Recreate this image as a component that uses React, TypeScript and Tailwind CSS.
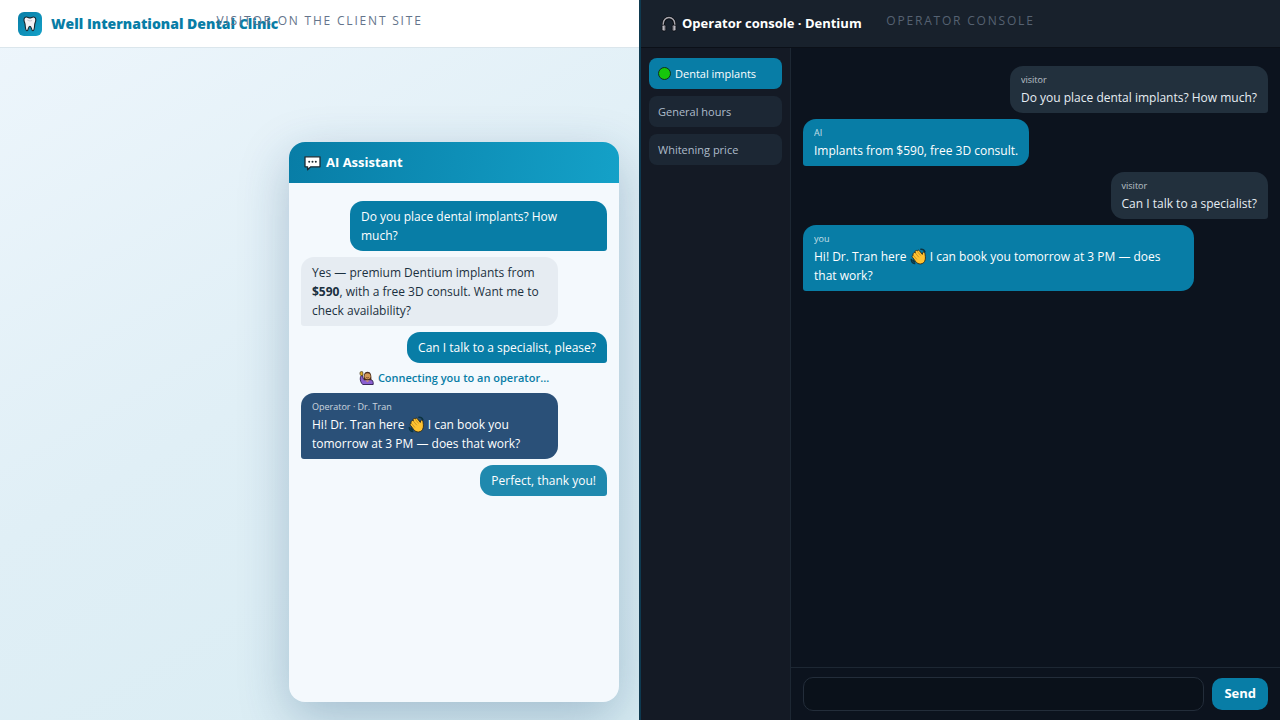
import { ReactNode } from "react";
import clsx from "clsx";

interface MessageInterface {
  id: number;
  from: "visitor" | "bot" | "operator";
  meta?: string;
  text: ReactNode;
  fading?: boolean;
}

function ToothIcon() {
  return (
    <svg width="16" height="16" viewBox="0 0 16 16" aria-hidden="true">
      <path
        d="M4.2 1C2.4 1.3 1.7 3 2.1 5c.2 1.200.9 2.200 1 3.500.2 2.500.3 6.300 1.900 6.300 1.500 0 1.100-4.600 2.900-4.600s1.400 4.600 2.900 4.600c1.600 0 1.700-3.800 1.900-6.300.1-1.300.8-2.300 1-3.500.4-2-.3-3.700-2.100-4C10.300.8 9.300 1.900 7.900 1.900S5.500.8 4.200 1z"
        fill="#f3f0f4"
        stroke="#17252c"
        strokeWidth="1.1"
      />
      <path d="M5.400 4c1 .8 3.200 1.300 4.600.5" fill="none" stroke="#b9b4c2" strokeWidth=".8" />
    </svg>
  );
}

function SpeechIcon() {
  return (
    <svg width="17" height="16" viewBox="0 0 17 16" aria-hidden="true">
      <path
        d="M1 1.800h15v10H6.800L3.600 14.800v-3H1z"
        fill="#fff"
        stroke="#1c2b33"
        strokeWidth="1.300"
        strokeLinejoin="round"
      />
      <circle cx="5.200" cy="6.800" r="1" fill="#1c2b33" />
      <circle cx="8.500" cy="6.800" r="1" fill="#1c2b33" />
      <circle cx="11.800" cy="6.800" r="1" fill="#1c2b33" />
    </svg>
  );
}

function HeadphonesIcon() {
  return (
    <svg width="16" height="16" viewBox="0 0 16 16" aria-hidden="true">
      <path d="M2.500 11V7.500a5.500 5.800 0 0 1 11 0V11" fill="none" stroke="#06090d" strokeWidth="3" />
      <path d="M2.300 11V7.500a5.700 6 0 0 1 11.400 0V11" fill="none" stroke="#a9a7ae" strokeWidth="1.500" />
      <rect x="1.200" y="9" width="3.600" height="6" rx="1.300" fill="#8d8b93" stroke="#06090d" strokeWidth=".7" />
      <rect x="11.200" y="9" width="3.600" height="6" rx="1.300" fill="#8d8b93" stroke="#06090d" strokeWidth=".7" />
      <path d="M2.200 10v4M13.800 10v4" stroke="#d8d6dc" strokeWidth=".9" />
    </svg>
  );
}

function WaveIcon() {
  return (
    <svg
      className="inline-block align-[-4px]"
      width="17"
      height="17"
      viewBox="0 0 16 16"
      role="img"
      aria-label="waving hand"
    >
      <path
        d="M3.300 4.800c.5-.7 1.200-.7 1.700-.2L4.800 3.400c0-1.100 1.200-1.500 1.900-.7.6-.8 1.500-.9 2.100-.2L11.600 6l.3-1.400c.3-1.200 1.900-1.100 2.100.2.300 2.100.8 4.200.3 6.200-.5 2.400-2.100 3.800-4.300 4-2 .1-3.500-.7-4.700-2.300L2.300 8.700c-.7-1-.2-1.900.8-1.900-.5-.6-.4-1.400.2-2z"
        fill="#ffc331"
        stroke="#2b2412"
        strokeWidth=".8"
      />
      <path d="M5 4.700l3.300 4M6.700 2.900l3.300 4.200M3.200 6.900l3.300 3.900" fill="none" stroke="#b27d1c" strokeWidth=".6" />
      <path
        d="M10.200 1.200c1.800-.1 3.300.8 3.800 2.300M1.200 10.800c.1 2 1.300 3.500 3.200 3.900M2.900 11.400c.2.900.8 1.500 1.600 1.700"
        fill="none"
        stroke="#0c3440"
        strokeWidth="1.400"
        strokeLinecap="round"
      />
    </svg>
  );
}

function RaisedHandIcon() {
  return (
    <svg width="15" height="14" viewBox="0 0 15 14" aria-hidden="true">
      <path d="M2.200 4.500L1.300 6.800c-.3 3 .8 5 2.400 6.700h10.500c.3-3-.7-4.700-2.700-5H5.800C4 8.300 3.700 6.500 3.700 4.700z" fill="#8b5fd0" stroke="#2b1c4b" strokeWidth=".9" />
      <path d="M1 1.300L2 .6l1.700.2.4 3.400-2 .6C1.200 4.200.7 2.500 1 1.300z" fill="#e3b02a" stroke="#2c2110" strokeWidth=".6" />
      <path d="M4.800 9.200C4.400 4 5.200.8 8.500.8s4.200 3.200 3.800 8.400z" fill="#4a2d1c" />
      <circle cx="8.500" cy="5.200" r="3" fill="#d39a58" />
      <path d="M7.200 6.300c.8.8 1.800.8 2.600 0" fill="none" stroke="#4d2a16" strokeWidth=".7" />
      <path d="M6.300 9.500h4.400l-2.200 1.400z" fill="#d39a58" />
    </svg>
  );
}

const widgetMessages: MessageInterface[] = [
  { id: 1, from: "visitor", text: "Do you place dental implants? How much?" },
  {
    id: 2,
    from: "bot",
    text: (
      <>
        Yes — premium Dentium implants from <b>$590</b>, with a free 3D consult. Want me to check
        availability?
      </>
    ),
  },
  { id: 3, from: "visitor", text: "Can I talk to a specialist, please?" },
];

const handoffMessages: MessageInterface[] = [
  {
    id: 4,
    from: "operator",
    meta: "Operator · Dr. Tran",
    text: (
      <>
        Hi! Dr. Tran here <WaveIcon /> I can book you tomorrow at 3 PM — does that work?
      </>
    ),
  },
  { id: 5, from: "visitor", text: "Perfect, thank you!", fading: true },
];

const consoleMessages: MessageInterface[] = [
  { id: 1, from: "visitor", meta: "visitor", text: "Do you place dental implants? How much?" },
  { id: 2, from: "bot", meta: "AI", text: "Implants from $590, free 3D consult." },
  { id: 3, from: "visitor", meta: "visitor", text: "Can I talk to a specialist?" },
  {
    id: 4,
    from: "operator",
    meta: "you",
    text: (
      <>
        Hi! Dr. Tran here <WaveIcon /> I can book you tomorrow at 3 PM — does that work?
      </>
    ),
  },
];

const conversations = [
  { id: 1, title: "Dental implants", active: true },
  { id: 2, title: "General hours", active: false },
  { id: 3, title: "Whitening price", active: false },
];

const widgetColors = {
  visitor: "bg-[#087da6] text-white",
  bot: "bg-[#e6ecf2] text-[#1b3040]",
  operator: "bg-[#2a5078] text-white",
};

const consoleColors = {
  visitor: "bg-[#22303d] text-[#e6edf3]",
  bot: "bg-[#087da6] text-white",
  operator: "bg-[#087da6] text-white",
};

function Bubble({
  message,
  colors,
}: {
  message: MessageInterface;
  colors: typeof widgetColors;
}) {
  return (
    <div
      className={clsx(
        "max-w-[84%] rounded-[13px] px-[11px] py-1.5 text-xs leading-[19px]",
        message.from === "visitor" ? "self-end rounded-br-[3px]" : "self-start rounded-bl-[3px]",
        message.fading && "opacity-90",
        colors[message.from]
      )}
    >
      {message.meta && (
        <div className="text-[9px] leading-4 opacity-75">{message.meta}</div>
      )}
      <p>{message.text}</p>
    </div>
  );
}

function ClientSite() {
  return (
    <section className="relative flex flex-col bg-linear-150 from-[#eef6fc] via-[#e0eff6] to-[#d8ecf3]">
      <header className="flex h-12 items-center gap-[9px] border-b border-[#dbe6ec] bg-white px-[18px]">
        <div className="flex size-6 items-center justify-center rounded-md bg-linear-135 from-[#087da6] to-[#14a1c8]">
          <ToothIcon />
        </div>
        <h1 className="text-sm font-extrabold text-[#087da6]">Well International Dental Clinic</h1>
      </header>
      <p className="absolute inset-x-0 top-3 text-center text-xs leading-[18px] tracking-[0.15em] text-[#64748b]">
        VISITOR ON THE CLIENT SITE
      </p>
      <div className="flex flex-1 items-end justify-end px-5 pb-[18px]">
        <div className="flex h-[560px] w-[330px] flex-col overflow-hidden rounded-2xl bg-[#f4f9fd] shadow-[0_16px_50px_rgba(20,70,110,0.28)]">
          <div className="flex items-center gap-[5px] bg-linear-100 from-[#087da6] to-[#14a1c8] px-[15px] py-[10px] text-[13px] leading-[21px] font-bold text-white">
            <SpeechIcon />
            <h2>AI Assistant</h2>
          </div>
          <div className="flex flex-1 flex-col gap-1.5 px-3 pt-[18px]">
            {widgetMessages.map((message) => (
              <Bubble key={message.id} message={message} colors={widgetColors} />
            ))}
            <div className="flex items-center justify-center gap-1 text-[11px] leading-[18px] font-semibold text-[#087da6]">
              <RaisedHandIcon />
              Connecting you to an operator…
            </div>
            {handoffMessages.map((message) => (
              <Bubble key={message.id} message={message} colors={widgetColors} />
            ))}
          </div>
        </div>
      </div>
    </section>
  );
}

function OperatorConsole() {
  return (
    <section className="relative flex flex-col bg-[#0c131e]">
      <header className="flex h-12 items-center gap-[5px] border-b border-[#0b1018] bg-[#18212c] px-5 text-white">
        <HeadphonesIcon />
        <h1 className="text-[13px] font-bold">Operator console · Dentium</h1>
      </header>
      <p className="absolute inset-x-0 top-3 text-center text-xs leading-[18px] tracking-[0.15em] text-[#566272]">
        OPERATOR CONSOLE
      </p>
      <div className="flex flex-1">
        <nav className="flex w-[150px] flex-col gap-[7px] border-r border-[#1d2733] bg-[#141a25] px-2 pt-[10px]">
          {conversations.map((item) => (
            <button
              key={item.id}
              className={clsx(
                "flex items-center gap-1 rounded-lg px-[9px] py-[7px] text-left text-[11px] leading-[17px]",
                item.active ? "bg-[#087da6] text-white" : "bg-[#1c2734] text-[#aebccb]"
              )}
            >
              {item.active && (
                <span className="size-[13px] rounded-full border border-[#10301c] bg-[#16c60c]" />
              )}
              {item.title}
            </button>
          ))}
        </nav>
        <div className="flex flex-1 flex-col">
          <div className="flex flex-1 flex-col gap-1.5 px-3 pt-[18px]">
            {consoleMessages.map((message) => (
              <Bubble key={message.id} message={message} colors={consoleColors} />
            ))}
          </div>
          <form
            className="flex items-center gap-2 border-t border-[#1d2733] px-3 py-[9px]"
            onSubmit={(e) => e.preventDefault()}
          >
            <input
              type="text"
              aria-label="Reply"
              className="h-[34px] min-w-0 flex-1 rounded-[10px] border border-[#232d3a] bg-[#0a111a] px-3 text-[13px] text-white outline-none"
            />
            <button className="h-8 rounded-[10px] bg-[#087da6] px-3 text-[13px] font-bold text-white">
              Send
            </button>
          </form>
        </div>
      </div>
    </section>
  );
}

export default function App() {
  return (
    <main className="grid min-h-screen grid-cols-[1fr_2px_1fr] font-['Open_Sans','Noto_Sans',sans-serif]">
      <ClientSite />
      <div className="bg-[#0f3a50]" />
      <OperatorConsole />
    </main>
  );
}
